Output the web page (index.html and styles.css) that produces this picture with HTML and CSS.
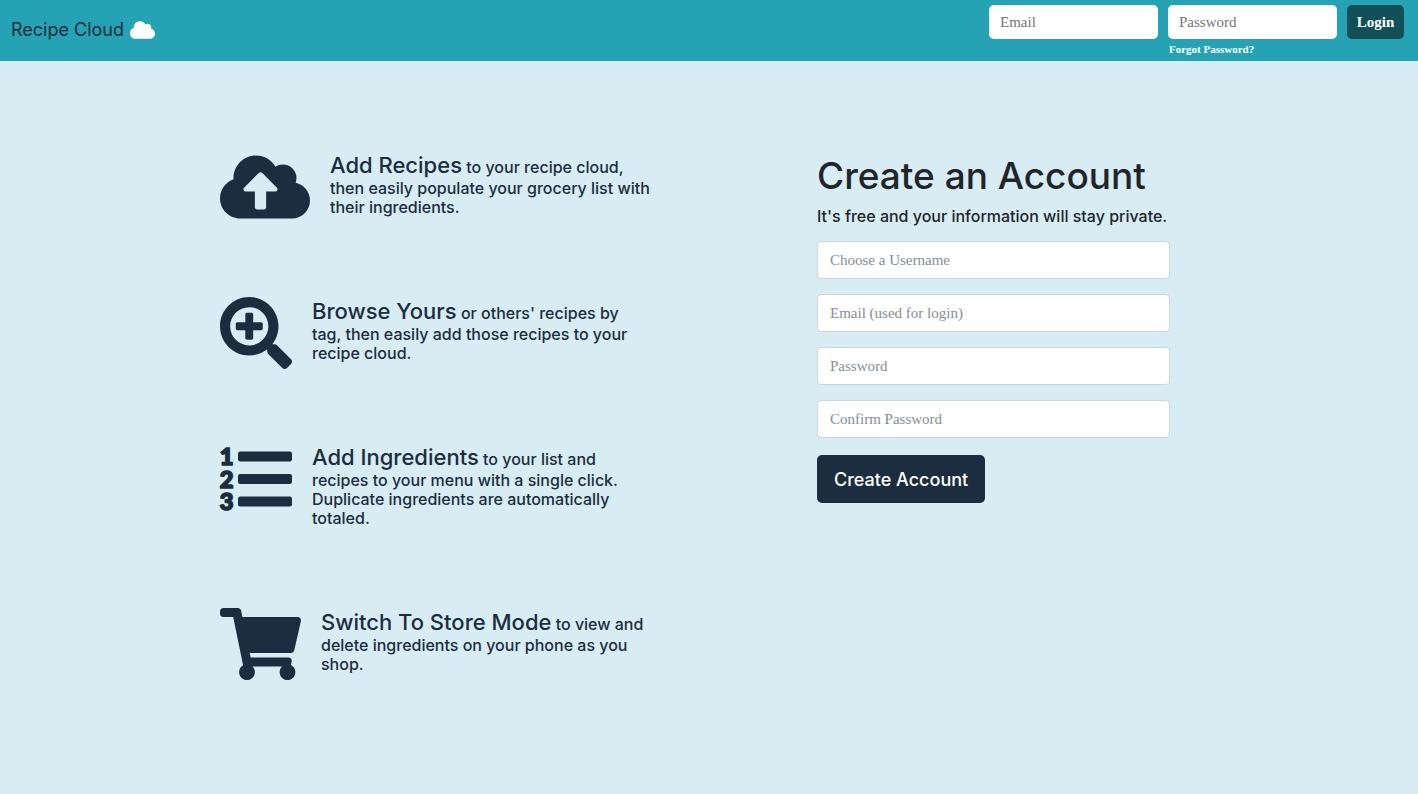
FILE: index.html
```html
<!DOCTYPE html>
<html lang="en">
<head>
<meta charset="utf-8">
<meta name="viewport" content="width=device-width, initial-scale=1">
<title>Recipe Cloud</title>
<link rel="stylesheet" href="styles.css">
</head>
<body>
<header class="navbar">
  <a class="brand" href="#">Recipe Cloud
    <svg class="brand-icon" viewBox="0 0 640 512" aria-hidden="true"><path d="M537.6 226.6c4.1-10.7 6.4-22.4 6.4-34.6 0-53-43-96-96-96-19.7 0-38.1 6-53.3 16.2C367 64.2 315.3 32 256 32c-88.4 0-160 71.6-160 160 0 2.7.1 5.4.2 8.1C40.2 219.8 0 273.2 0 336c0 79.5 64.5 144 144 144h368c70.7 0 128-57.3 128-128 0-61.9-44-113.6-102.4-125.4z"/></svg>
  </a>
  <form class="login">
    <input class="login-input" type="email" placeholder="Email" aria-label="Email">
    <div class="login-password">
      <input class="login-input" type="password" placeholder="Password" aria-label="Password">
      <a class="forgot" href="#">Forgot Password?</a>
    </div>
    <button class="login-button" type="submit">Login</button>
  </form>
</header>
<main class="page">
  <section class="features">
    <div class="feature">
      <svg class="icon icon-cloud" viewBox="0 0 640 512" aria-hidden="true"><path d="M537.6 226.6c4.1-10.7 6.4-22.4 6.4-34.6 0-53-43-96-96-96-19.7 0-38.1 6-53.3 16.2C367 64.2 315.3 32 256 32c-88.4 0-160 71.6-160 160 0 2.7.1 5.4.2 8.1C40.2 219.8 0 273.2 0 336c0 79.5 64.5 144 144 144h368c70.7 0 128-57.3 128-128 0-61.9-44-113.6-102.4-125.4zM393.4 288H328v112c0 8.800-7.200 16-16 16h-48c-8.800 0-16-7.200-16-16V288h-65.400c-14.300 0-21.400-17.200-11.300-27.300l105.400-105.400c6.200-6.200 16.400-6.200 22.600 0l105.400 105.400c10.100 10.100 2.900 27.300-11.300 27.300z"/></svg>
      <p class="feature-text"><span class="lead">Add Recipes</span> to your recipe cloud, then easily populate your grocery list with their ingredients.</p>
    </div>
    <div class="feature">
      <svg class="icon" viewBox="0 0 512 512" aria-hidden="true"><path d="M304 192v32c0 6.600-5.400 12-12 12h-56v56c0 6.600-5.400 12-12 12h-32c-6.600 0-12-5.400-12-12v-56h-56c-6.600 0-12-5.400-12-12v-32c0-6.600 5.400-12 12-12h56v-56c0-6.600 5.400-12 12-12h32c6.600 0 12 5.400 12 12v56h56c6.600 0 12 5.400 12 12zm201 284.700L476.700 505c-9.400 9.400-24.600 9.400-33.900 0L343 405.300c-4.500-4.500-7-10.600-7-17V372c-35.300 27.600-79.700 44-128 44C93.100 416 0 322.900 0 208S93.100 0 208 0s208 93.100 208 208c0 48.300-16.400 92.700-44 128h16.300c6.400 0 12.500 2.500 17 7l99.700 99.700c9.300 9.400 9.300 24.600 0 34zM344 208c0-75.200-60.800-136-136-136S72 132.800 72 208s60.800 136 136 136 136-60.800 136-136z"/></svg>
      <p class="feature-text"><span class="lead">Browse Yours</span> or others' recipes by tag, then easily add those recipes to your recipe cloud.</p>
    </div>
    <div class="feature">
      <svg class="icon" viewBox="0 0 512 512" aria-hidden="true">
        <rect x="128" y="60" width="384" height="72" rx="16"/>
        <rect x="128" y="220" width="384" height="72" rx="16"/>
        <rect x="128" y="380" width="384" height="72" rx="16"/>
        <g class="icon-digits"><text x="47" y="156">1</text><text x="47" y="317">2</text><text x="47" y="477">3</text></g>
      </svg>
      <p class="feature-text"><span class="lead">Add Ingredients</span> to your list and recipes to your menu with a single click. Duplicate ingredients are automatically totaled.</p>
    </div>
    <div class="feature">
      <svg class="icon icon-cart" viewBox="0 0 576 512" aria-hidden="true"><path d="M528.12 301.319l47.273-208C578.806 78.301 567.391 64 551.99 64H159.208l-9.166-44.81C147.758 8.021 137.93 0 126.529 0H24C10.745 0 0 10.745 0 24v16c0 13.255 10.745 24 24 24h69.883l70.248 343.435C147.325 417.1 136 435.222 136 456c0 30.928 25.072 56 56 56s56-25.072 56-56c0-15.674-6.447-29.835-16.824-40h209.647C430.447 426.165 424 440.326 424 456c0 30.928 25.072 56 56 56s56-25.072 56-56c0-22.172-12.888-41.332-31.579-50.405l5.517-24.276c3.413-15.018-8.002-29.319-23.403-29.319H218.117l-6.545-32h293.145c11.206 0 20.92-7.754 23.403-18.681z"/></svg>
      <p class="feature-text"><span class="lead">Switch To Store Mode</span> to view and delete ingredients on your phone as you shop.</p>
    </div>
  </section>
  <section class="signup">
    <h1 class="signup-title">Create an Account</h1>
    <p class="signup-note">It's free and your information will stay private.</p>
    <form class="signup-form">
      <input class="field" type="text" placeholder="Choose a Username" aria-label="Choose a Username">
      <input class="field" type="email" placeholder="Email (used for login)" aria-label="Email (used for login)">
      <input class="field" type="password" placeholder="Password" aria-label="Password">
      <input class="field" type="password" placeholder="Confirm Password" aria-label="Confirm Password">
      <button class="create-button" type="submit">Create Account</button>
    </form>
  </section>
</main>
</body>
</html>
```

FILE: styles.css
```css
*, *::before, *::after { box-sizing: border-box; }

body {
  margin: 0;
  min-height: 100vh;
  background: #d8ecf3;
  color: #212529;
  font-family: Inter, "Liberation Sans", sans-serif;
  font-size: 16px;
  line-height: 19px;
}

input, button { margin: 0; border: 0; font-family: "Liberation Serif", serif; font-size: 16px; }

.navbar {
  display: flex;
  justify-content: space-between;
  padding: 5px 14px 3px 11px;
  background: #25a2b4;
}
.brand {
  display: flex;
  align-items: center;
  align-self: center;
  gap: 6px;
  color: #1b2d3f;
  font-size: 18px;
  line-height: 24px;
  text-decoration: none;
  padding-bottom: 4px;
}
.brand-icon { width: 25px; height: 20px; fill: #fff; }

.login { display: flex; align-items: flex-start; gap: 10px; }
.login-password { display: flex; flex-direction: column; }
.login-input {
  width: 169px;
  height: 34px;
  padding: 0 11px;
  border-radius: 5px;
  background: #fff;
}
.login-input::placeholder { color: #757575; opacity: 1; }
.forgot {
  padding: 2px 0 0 1px;
  color: #fff;
  font: bold 11px/17px "Liberation Serif", serif;
  text-decoration: none;
}
.login-button {
  width: 57px;
  height: 34px;
  padding: 0;
  border-radius: 5px;
  background: #134f57;
  color: #fff;
  font-size: 15px;
  font-weight: bold;
}

.page {
  display: grid;
  grid-template-columns: minmax(0, 431px) minmax(0, 353px);
  column-gap: 166px;
  padding: 90px 20px 40px 220px;
}

.features { display: flex; flex-direction: column; gap: 71px; color: #1b2d3f; }
.feature { display: flex; align-items: flex-start; gap: 20px; }
.icon { flex: none; width: 72px; height: 72px; fill: #1b2d3f; overflow: visible; }
.icon-cloud { width: 90px; }
.icon-cart { width: 81px; }
.icon-digits { font: 900 168px Lato, sans-serif; text-anchor: middle; stroke: #1b2d3f; stroke-width: 12px; }
.feature-text { margin: 0; padding: 1px 0 9px; font-weight: 500; }
.lead { font-size: 22px; line-height: 27px; }

.signup-title { margin: 0 0 7px; font-size: 37px; line-height: 48px; font-weight: 500; }
.signup { padding-top: 1px; }
.signup-note { margin: 0 0 15px; font-weight: 500; white-space: nowrap; }
.signup-form { display: flex; flex-direction: column; align-items: flex-start; gap: 15px; }
.field {
  width: 100%;
  height: 38px;
  padding: 0 12px;
  border: 1px solid #ced4da;
  border-radius: 4px;
  background: #fff;
}
.field::placeholder { color: #868e96; opacity: 1; }
.field, .login-input { font-size: 15px; }
.create-button {
  height: 48px;
  margin-top: 2px;
  padding: 0 17px;
  border-radius: 5px;
  background: #1b2d3f;
  color: #fff;
  font-family: Inter, "Liberation Sans", sans-serif;
  font-size: 18px;
  font-weight: 500;
}
```
